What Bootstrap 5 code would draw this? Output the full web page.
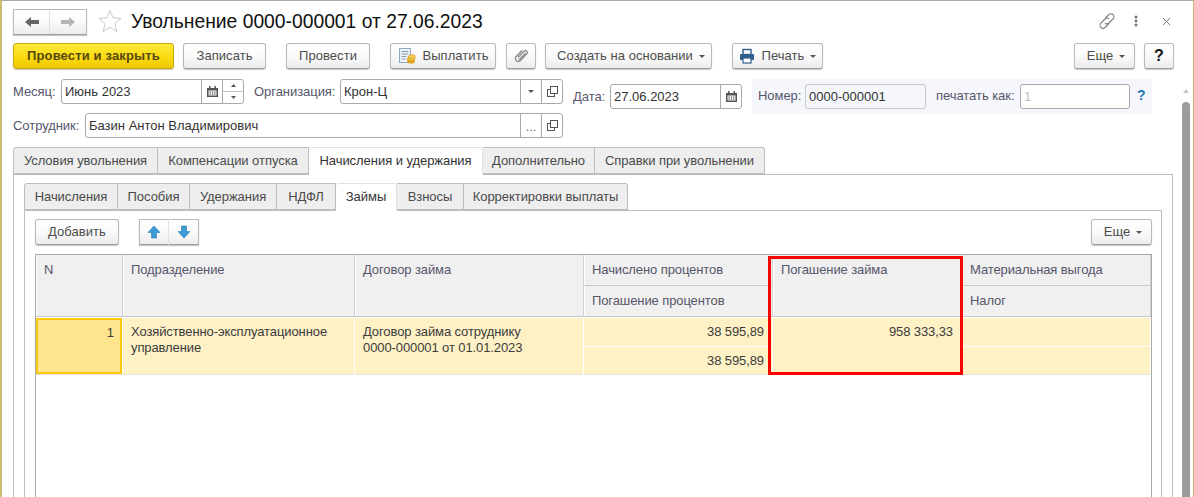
<!DOCTYPE html>
<html lang="ru">
<head>
<meta charset="utf-8">
<title>Увольнение</title>
<link rel="stylesheet" href="https://cdn.jsdelivr.net/npm/bootstrap@5.3.0/dist/css/bootstrap.min.css">
<style>
html,body{margin:0;height:497px;overflow:hidden;background:#fff}
body{font-family:"Liberation Sans",Arial,sans-serif;font-size:13px;color:#4a4a4a;line-height:16px}
.app-frame{height:497px;border-top:1px solid #a8a8a0;border-left:2px solid #c9bb72;border-right:1px solid #c9bb72;overflow:hidden}
.app-main{width:1172px;padding-left:11px}
.title-bar{height:42px;padding-top:8px}
.hist-group{width:74px;height:24px}
.hist-btn{width:37px;height:24px}
.star-ico{margin-left:11px}
.form-title{font-size:19.3px;line-height:24px;color:#111;margin-left:9px;margin-top:1px}
.head-icons{margin-left:auto;margin-right:3px;height:24px}
.head-ico{display:block}
.ico-dots{margin-left:18px}
.ico-close{margin-left:24px}
.od-btn{--bs-btn-padding-x:0;--bs-btn-padding-y:0;--bs-btn-font-size:13px;--bs-btn-line-height:16px;--bs-btn-border-radius:3px;height:26px;background:linear-gradient(#fff 0,#fbfbfb 45%,#ececec 100%);border:1px solid #b9b9b9;border-bottom-color:#9e9e9e;box-shadow:0 1px 1px #c8c8c8;color:#4d4d4d;display:inline-flex;align-items:center;justify-content:center;letter-spacing:.05px;flex:none}
.od-btn:hover{color:#4d4d4d;border-color:#b9b9b9}
.od-primary{background:linear-gradient(#ffe93b 0,#fbdc14 50%,#f0c800 100%);border-color:#c9a90a;color:#56480a;font-weight:700;width:161px;letter-spacing:.15px}
.od-primary:hover{color:#56480a;border-color:#c9a90a}
.tool-row{height:26px;margin-bottom:10px}
.w-save{width:83px;margin-left:9px}
.w-post{width:84px;margin-left:20px}
.w-pay{width:106px;margin-left:20px}
.w-clip{width:30px;margin-left:10px}
.w-create{width:167px;margin-left:9px;padding-left:5px}
.w-print{width:91px;margin-left:20px}
.w-more{width:61px;margin-left:auto;padding-left:3px}
.w-help{width:30px;margin-left:9px;font-weight:700;color:#111;font-size:16px}
.w-help:hover{color:#111}
.w-add{width:84px}
.w-more2{width:61px;margin-left:auto;padding-left:3px}
.caret-mark{display:inline-block;width:0;height:0;border-left:3px solid transparent;border-right:3px solid transparent;border-top:3px solid #555;margin-left:6px}
.ico-left{margin-right:7px}
.field-area{height:68px}
.field-col{width:550px}
.field-line{height:25px;margin-bottom:9px}
.fld-label{flex:none;color:#56566a;letter-spacing:-.05px}
.lbl-month{width:48px}
.lbl-org{width:86px;margin-left:10px}
.lbl-emp{width:72px}
.lbl-date{width:37px}
.lbl-num{width:47px}
.lbl-print{width:84px;margin-left:10px}
.fld-box{height:25px;border:1px solid #a9a9a9;border-radius:3px;display:flex;align-items:stretch;background:#fff;color:#333;flex:none}
.fld-text{flex:1 1 auto;padding:4px 0 0 3px;white-space:nowrap;overflow:hidden}
.fld-seg{flex:none;width:21px;border-left:1px solid #a9a9a9;display:flex;align-items:center;justify-content:center}
.seg-dots{color:#777;align-items:flex-end;padding-bottom:2px}
.fld-spin{flex:none;width:21px;border-left:1px solid #a9a9a9;display:flex;flex-direction:column}
.fld-spin span{flex:1 1 0;display:flex;align-items:center;justify-content:center}
.fld-spin span+span{border-top:1px solid #c4c4c4}
.fld-month{width:183px}
.fld-org{width:223px}
.fld-emp{width:478px}
.date-wrap{margin-left:10px;margin-top:5px;width:169px}
.fld-date{width:132px}
.num-panel{width:400px;height:35px;margin-left:10px;background:#f5f7fc;padding:5px 0 0 6px}
.fld-num{width:121px;background:#f5f7fc;border-color:#c8c8c8}
.fld-print{width:110px;color:#bdbdbd}
.num-help{color:#1f78b4;font-weight:700;margin-left:7px;font-size:14px;margin-top:3px}
.tab-outer{grid-template-columns:145px 151px 174px 112px 170px}
.tab-inner{grid-template-columns:94px 72px 87px 59px 61px 67px 164px}
.tab-strip{display:grid;justify-content:start;border:0;height:27px;margin:0;position:relative;z-index:1}
.tab-strip .nav-link{height:27px;padding:5px 0 0;margin:0;text-align:center;background:#eee;color:#4a4a4a;border:1px solid #bdbdbd;border-left-width:0;border-radius:0;letter-spacing:-.05px;white-space:nowrap}
.tab-strip .nav-item:first-child .nav-link{border-left-width:1px;border-top-left-radius:3px}
.tab-strip .nav-item:last-child .nav-link{border-top-right-radius:3px}
.tab-strip .nav-link.active{background:#fff;border-bottom-color:#fff;height:28px;color:#333;border-top-left-radius:3px;border-top-right-radius:3px}
.panel-outer{width:1160px;height:323px;border:1px solid #bdbdbd;border-bottom:0;padding:8px 10px 0 10px}
.panel-inner{width:1138px;height:287px;border:1px solid #bdbdbd;border-bottom:0;padding:8px 9px 0 10px}
.grid-bar{height:26px;margin-bottom:9px}
.arrow-group{width:60px;margin-left:20px;height:26px}
.arrow-btn{width:30px;height:26px}
.grid-wrap{position:relative;width:1117px;height:243px;border:1px solid #a9a9a9;border-bottom:0}
.od-grid{table-layout:fixed;border-collapse:separate;border-spacing:0;width:1115px;letter-spacing:-.1px}
.col-n{width:87px}
.col-dep{width:232px}
.col-doc{width:229px}
.col-sum{width:189px}
.od-grid th,.od-grid td{vertical-align:top;padding:0 8px;font-weight:400}
.od-grid th{background:#f0f0f0;color:#56566a;border-right:1px solid #d2d2d2;box-shadow:inset 1px 0 #fff;padding-top:7px}
.od-grid td{background:#fdf1c5;color:#3c3c3c;border-right:1px solid #fff;padding-top:6px}
.head-a th{height:31px;border-bottom:1px solid #c9c9c9}
.head-b th{height:31px;border-bottom:1px solid #c9c9c9}
.th-tall{border-bottom:1px solid #c9c9c9}
.row-a td{height:29px}
.row-b td{height:28px}
.cell-sub{border-bottom:1px solid #fff}
.row-b td,.cell-tall{border-bottom:1px solid #e2e2e2}
.od-grid .cell-num{text-align:right}
.od-grid .cell-cur{background:#ffe48e;box-shadow:inset 0 0 0 2px #fcc80e;text-align:right;padding-right:8px;padding-top:7px}
.od-grid .gap-line td{height:1px;padding:0;background:#fff;border:0;line-height:1px;font-size:1px}
.hl-frame{position:absolute;left:732px;top:1px;width:195px;height:119px;border:3px solid #f00;pointer-events:none}
.scroll-col{width:8px;margin-left:8px;flex:none}
.scroll-up{display:block;margin:88px 0 0 1px}
.scroll-thumb{margin-top:9px;height:400px;background:#9c9c9c;border-radius:4px 4px 0 0}
</style>
</head>
<body>
<div class="app-frame d-flex">
  <div class="app-main">
    <div class="title-bar d-flex align-items-start">
      <div class="od-btn hist-group p-0">
        <span class="hist-btn d-flex align-items-center justify-content-center border-end">
          <svg width="16" height="12" viewBox="0 0 16 12"><path d="M1 6 7 1v3h8v4H7v3z" fill="#666"/></svg>
        </span>
        <span class="hist-btn d-flex align-items-center justify-content-center">
          <svg width="16" height="12" viewBox="0 0 16 12"><path d="M15 6 9 1v3H1v4h8v3z" fill="#b5b5b5"/></svg>
        </span>
      </div>
      <svg class="star-ico" width="24" height="24" viewBox="0 0 24 24"><path d="M12 1.500l3 7.400 8 .6-6.100 5.100 1.900 7.900L12 18.200 5.200 22.500l1.900-7.900L1 9.500l8-.6z" fill="#fff" stroke="#c9c9c9"/></svg>
      <div class="form-title">Увольнение 0000-000001 от 27.06.2023</div>
      <div class="head-icons d-flex align-items-center">
        <svg class="head-ico" width="18" height="18" viewBox="0 0 18 18" fill="none" stroke="#777" stroke-width="1.100"><path d="M7.500 6 10.800 2.700a3 3 0 0 1 4.300 4.200L11 11a3 3 0 0 1-4 .2"/><path d="M10.500 12 7.200 15.300a3 3 0 0 1-4.300-4.200L7 7a3 3 0 0 1 4-.2"/></svg>
        <svg class="head-ico ico-dots" width="4" height="12" viewBox="0 0 4 12"><circle cx="2" cy="2" r="1.500" fill="#777"/><circle cx="2" cy="6" r="1.500" fill="#777"/><circle cx="2" cy="10" r="1.500" fill="#777"/></svg>
        <svg class="head-ico ico-close" width="9" height="9" viewBox="0 0 9 9" stroke="#777" stroke-width="1"><path d="M1 1l7 7M8 1 1 8"/></svg>
      </div>
    </div>

    <div class="tool-row d-flex">
      <button class="btn od-btn od-primary">Провести и закрыть</button>
      <button class="btn od-btn w-save">Записать</button>
      <button class="btn od-btn w-post">Провести</button>
      <button class="btn od-btn w-pay">
        <svg class="ico-left" width="18" height="18" viewBox="0 0 18 18"><rect x="1.500" y="1.500" width="11" height="14" fill="#eef3fa" stroke="#8fa8c8"/><path d="M3.500 4.500h7M3.500 7h7M3.500 9.500h5M3.500 12h4" stroke="#8a9ab0"/><ellipse cx="13" cy="14.500" rx="4" ry="2" fill="#e3a41e"/><ellipse cx="13" cy="12" rx="4" ry="2" fill="#f2c23a" stroke="#c98f15" stroke-width=".6"/><ellipse cx="14" cy="9.500" rx="3.500" ry="1.800" fill="#f7d35a" stroke="#c98f15" stroke-width=".6"/></svg>Выплатить
      </button>
      <button class="btn od-btn w-clip">
        <svg width="15" height="16" viewBox="0 0 15 16" fill="none" stroke="#8a8a8a" stroke-width="1.300"><path d="M4 9.500 10 3a2 2 0 0 1 3 2.500L6 13a3 3 0 0 1-4.300-3.800L8 2.500"/><path d="M5 12 11.500 5"/></svg>
      </button>
      <button class="btn od-btn w-create">Создать на основании<span class="caret-mark"></span></button>
      <button class="btn od-btn w-print">
        <svg class="ico-left" width="16" height="16" viewBox="0 0 16 16"><rect x="4" y="1.500" width="8" height="5" fill="#fff" stroke="#2f5f8f" stroke-width="1.400"/><rect x="1" y="6" width="14" height="6" rx="1" fill="#2f5f8f"/><rect x="4" y="10" width="8" height="5" fill="#fff" stroke="#2f5f8f" stroke-width="1.200"/></svg>Печать<span class="caret-mark"></span>
      </button>
      <button class="btn od-btn w-more">Еще<span class="caret-mark"></span></button>
      <button class="btn od-btn w-help">?</button>
    </div>

    <div class="field-area d-flex align-items-start">
      <div class="field-col">
        <div class="field-line d-flex align-items-center">
          <span class="fld-label lbl-month">Месяц:</span>
          <div class="fld-box fld-month">
            <span class="fld-text">Июнь 2023</span>
            <span class="fld-seg"><svg width="11" height="11" viewBox="0 0 11 11"><path d="M0 2h11v9H0z" fill="#555"/><path d="M2 0h1.500v3H2zM7.500 0H9v3H7.500z" fill="#555"/><path d="M1.500 4.500h8v5h-8z" fill="#fff"/><path d="M2.500 5.500h1.300v1.300H2.500zM4.900 5.500h1.300v1.300H4.900zM7.200 5.500h1.300v1.300H7.200zM2.500 7.500h1.300v1.300H2.500zM4.900 7.500h1.300v1.300H4.900zM7.200 7.500h1.300v1.300H7.200z" fill="#555"/></svg></span>
            <span class="fld-spin">
              <span><svg width="5" height="3" viewBox="0 0 5 3"><path d="M2.500 0 5 3H0z" fill="#555"/></svg></span>
              <span><svg width="5" height="3" viewBox="0 0 5 3"><path d="M2.500 3 5 0H0z" fill="#555"/></svg></span>
            </span>
          </div>
          <span class="fld-label lbl-org">Организация:</span>
          <div class="fld-box fld-org">
            <span class="fld-text">Крон-Ц</span>
            <span class="fld-seg"><svg width="6" height="3" viewBox="0 0 6 3"><path d="M0 0h6L3 3z" fill="#555"/></svg></span>
            <span class="fld-seg"><svg width="11" height="11" viewBox="0 0 11 11" fill="#fff" stroke="#555"><rect x=".5" y="3.500" width="7" height="7" fill="none"/><rect x="3.500" y=".5" width="7" height="7"/></svg></span>
          </div>
        </div>
        <div class="field-line d-flex align-items-center">
          <span class="fld-label lbl-emp">Сотрудник:</span>
          <div class="fld-box fld-emp">
            <span class="fld-text">Базин Антон Владимирович</span>
            <span class="fld-seg seg-dots">...</span>
            <span class="fld-seg"><svg width="11" height="11" viewBox="0 0 11 11" fill="#fff" stroke="#555"><rect x=".5" y="3.500" width="7" height="7" fill="none"/><rect x="3.500" y=".5" width="7" height="7"/></svg></span>
          </div>
        </div>
      </div>
      <div class="date-wrap d-flex align-items-center">
        <span class="fld-label lbl-date">Дата:</span>
        <div class="fld-box fld-date">
          <span class="fld-text">27.06.2023</span>
          <span class="fld-seg"><svg width="11" height="11" viewBox="0 0 11 11"><path d="M0 2h11v9H0z" fill="#555"/><path d="M2 0h1.500v3H2zM7.500 0H9v3H7.500z" fill="#555"/><path d="M1.500 4.500h8v5h-8z" fill="#fff"/><path d="M2.500 5.500h1.300v1.300H2.500zM4.900 5.500h1.300v1.300H4.900zM7.200 5.500h1.300v1.300H7.200zM2.500 7.500h1.300v1.300H2.500zM4.900 7.500h1.300v1.300H4.900zM7.200 7.500h1.300v1.300H7.200z" fill="#555"/></svg></span>
        </div>
      </div>
      <div class="num-panel d-flex align-items-start">
        <span class="fld-label lbl-num mt-1">Номер:</span>
        <div class="fld-box fld-num"><span class="fld-text">0000-000001</span></div>
        <span class="fld-label lbl-print mt-1">печатать как:</span>
        <div class="fld-box fld-print"><span class="fld-text">1</span></div>
        <span class="num-help">?</span>
      </div>
    </div>

    <ul class="nav nav-tabs tab-strip tab-outer">
      <li class="nav-item"><a class="nav-link" href="#">Условия увольнения</a></li>
      <li class="nav-item"><a class="nav-link" href="#">Компенсации отпуска</a></li>
      <li class="nav-item"><a class="nav-link active" href="#">Начисления и удержания</a></li>
      <li class="nav-item"><a class="nav-link" href="#">Дополнительно</a></li>
      <li class="nav-item"><a class="nav-link" href="#">Справки при увольнении</a></li>
    </ul>
    <div class="panel-outer">
      <ul class="nav nav-tabs tab-strip tab-inner">
        <li class="nav-item"><a class="nav-link" href="#">Начисления</a></li>
        <li class="nav-item"><a class="nav-link" href="#">Пособия</a></li>
        <li class="nav-item"><a class="nav-link" href="#">Удержания</a></li>
        <li class="nav-item"><a class="nav-link" href="#">НДФЛ</a></li>
        <li class="nav-item"><a class="nav-link active" href="#">Займы</a></li>
        <li class="nav-item"><a class="nav-link" href="#">Взносы</a></li>
        <li class="nav-item"><a class="nav-link" href="#">Корректировки выплаты</a></li>
      </ul>
      <div class="panel-inner">
        <div class="grid-bar d-flex">
          <button class="btn od-btn w-add">Добавить</button>
          <div class="od-btn arrow-group p-0">
            <span class="arrow-btn d-flex align-items-center justify-content-center border-end">
              <svg width="14" height="14" viewBox="0 0 14 14"><path d="M7 1 13 7.500H9.500V13h-5V7.500H1z" fill="#3d9bd8" stroke="#2a78ad" stroke-width=".6"/></svg>
            </span>
            <span class="arrow-btn d-flex align-items-center justify-content-center">
              <svg width="14" height="14" viewBox="0 0 14 14"><path d="M7 13 13 6.500H9.500V1h-5v5.500H1z" fill="#3d9bd8" stroke="#2a78ad" stroke-width=".6"/></svg>
            </span>
          </div>
          <button class="btn od-btn w-more2">Еще<span class="caret-mark"></span></button>
        </div>
        <div class="grid-wrap">
          <table class="od-grid">
            <colgroup><col class="col-n"><col class="col-dep"><col class="col-doc"><col class="col-sum"><col class="col-sum"><col class="col-sum"></colgroup>
            <thead>
              <tr class="head-a">
                <th rowspan="2" class="th-tall">N</th>
                <th rowspan="2" class="th-tall">Подразделение</th>
                <th rowspan="2" class="th-tall">Договор займа</th>
                <th>Начислено процентов</th>
                <th rowspan="2" class="th-tall">Погашение займа</th>
                <th>Материальная выгода</th>
              </tr>
              <tr class="head-b">
                <th>Погашение процентов</th>
                <th>Налог</th>
              </tr>
            </thead>
            <tbody>
              <tr class="gap-line"><td colspan="6"></td></tr>
              <tr class="row-a">
                <td rowspan="2" class="cell-tall cell-cur">1</td>
                <td rowspan="2" class="cell-tall">Хозяйственно-эксплуатационное<br>управление</td>
                <td rowspan="2" class="cell-tall">Договор займа сотруднику<br>0000-000001 от 01.01.2023</td>
                <td class="cell-num cell-sub">38 595,89</td>
                <td rowspan="2" class="cell-tall cell-num">958 333,33</td>
                <td class="cell-sub"></td>
              </tr>
              <tr class="row-b">
                <td class="cell-num">38 595,89</td>
                <td></td>
              </tr>
            </tbody>
          </table>
          <div class="hl-frame"></div>
        </div>
      </div>
    </div>
  </div>
  <div class="scroll-col">
    <svg class="scroll-up" width="6" height="4" viewBox="0 0 6 4"><path d="M3 0 6 4H0z" fill="#c8c8c8"/></svg>
    <div class="scroll-thumb"></div>
  </div>
</div>
<script src="https://cdn.jsdelivr.net/npm/bootstrap@5.3.0/dist/js/bootstrap.bundle.min.js"></script>
</body>
</html>
